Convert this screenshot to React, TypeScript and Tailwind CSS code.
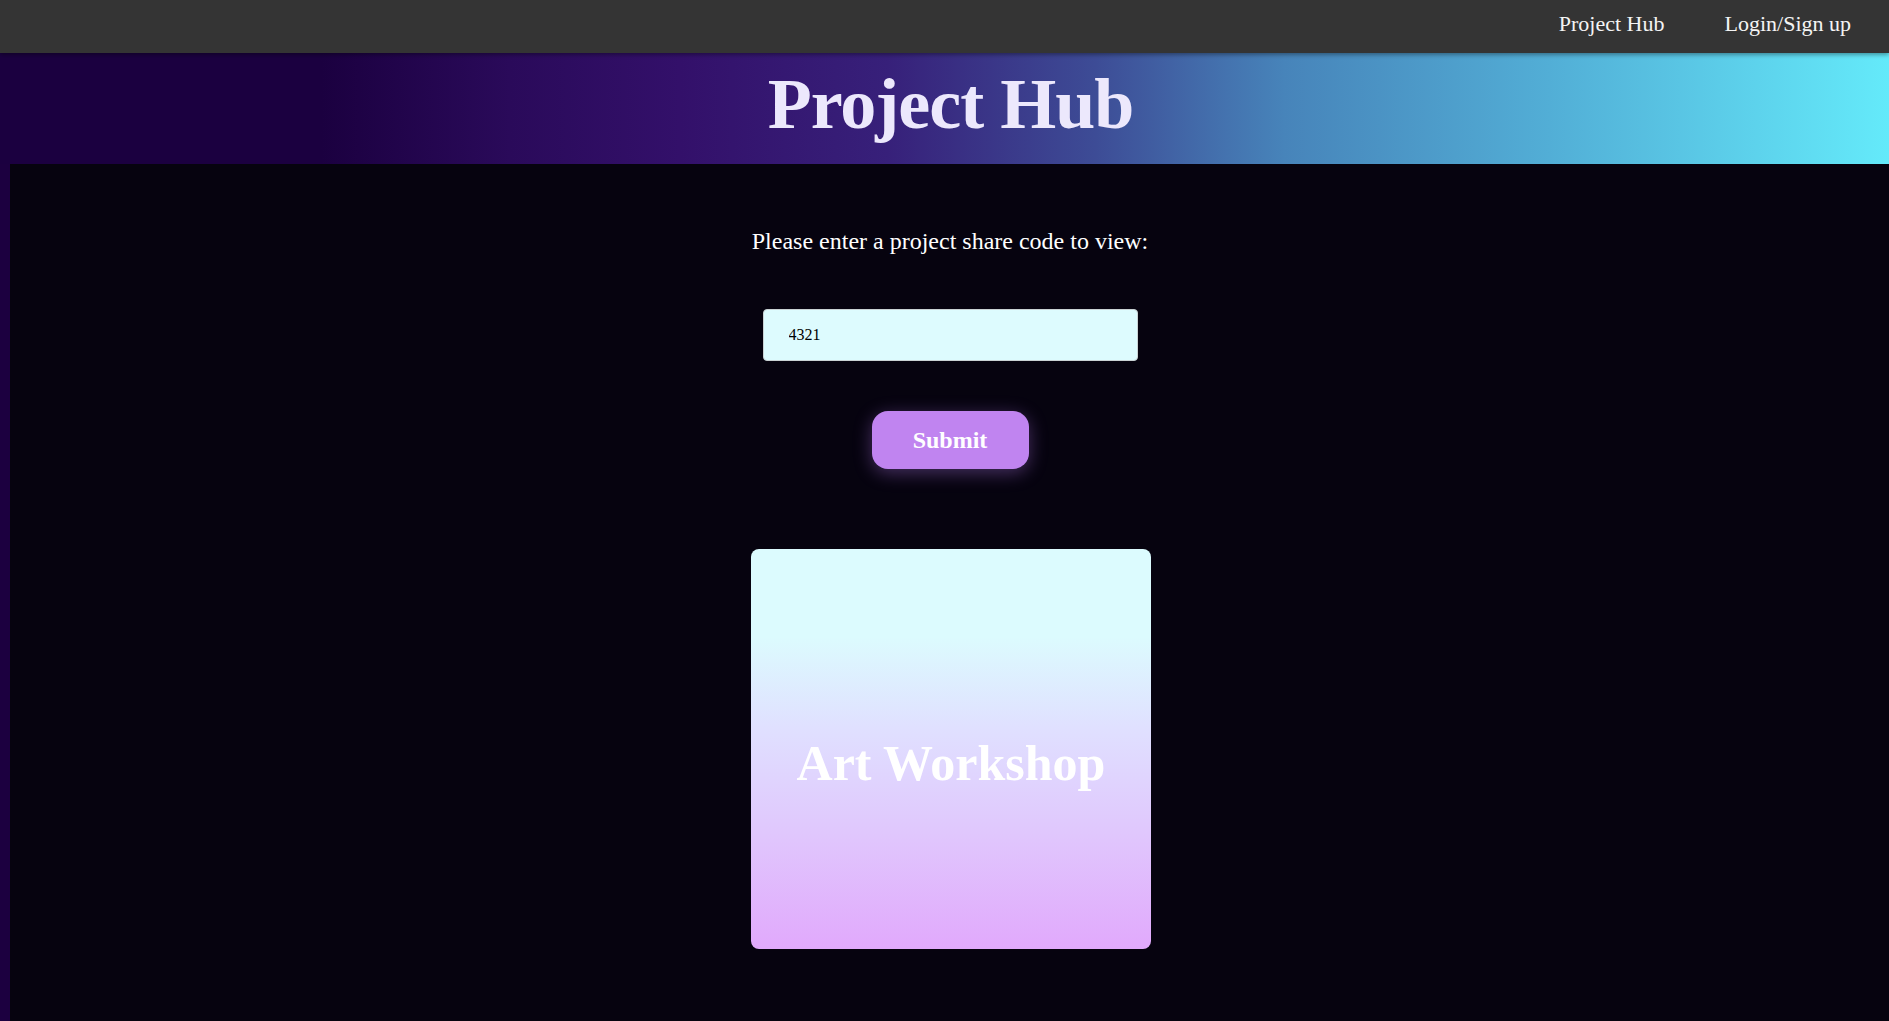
import React, { useState } from 'react';

const NavBar = () => {
    return (
        <nav className="relative z-10 h-[53px] bg-[#343434] flex items-center justify-end gap-[60px] pr-[38px] pb-[5px] text-[22px] text-[#f4f4f4] shadow-[0_2px_4px_rgba(0,0,0,0.35)]">
            <a href="#" className="leading-none">Project Hub</a>
            <a href="#" className="leading-none">Login/Sign up</a>
        </nav>
    );
};

const Banner = () => {
    return (
        <header className="h-[111px] pl-[12px] pb-[10px] flex items-center justify-center bg-[linear-gradient(to_right,#1b0040_0%,#1b0040_17%,#2a0a5a_27%,#33106a_36%,#37207a_47%,#3d4c96_58%,#4784ba_68%,#52aed6_82%,#64eafa_100%)]">
            <h1 className="text-[72px] font-bold text-[#ece8fc] leading-none tracking-[-1px]">Project Hub</h1>
        </header>
    );
};

const ProjectCard = ({ title }: { title: string }) => {
    return (
        <div className="w-[400px] h-[400px] rounded-lg flex items-center justify-center pt-[28px] bg-[linear-gradient(to_bottom,#dcfbfe_0%,#dcfbfe_22%,#e0e0ff_45%,#e0c8fd_70%,#e1a9fc_100%)]">
            <h2 className="text-[50px] font-bold text-white leading-none">{title}</h2>
        </div>
    );
};

export default function App() {
    const [code, setCode] = useState('4321');

    return (
        <div className="min-h-screen bg-[#1c0040] font-['Liberation_Serif','Times_New_Roman',serif]">
            <NavBar />
            <Banner />
            <main className="ml-[10px] pl-[1px] min-h-[857px] bg-[#06030f] flex flex-col items-center">
                <p className="mt-[63px] text-[24px] leading-[28px] text-white">Please enter a project share code to view:</p>
                <input
                    value={code}
                    onChange={(e) => setCode(e.target.value)}
                    className="mt-[54px] w-[375px] h-[52px] pl-[25px] rounded-[4px] border border-[#c9d2d4] bg-[#ddfbfe] text-[16px] text-black outline-none"
                />
                <button className="mt-[50px] w-[157px] h-[58px] rounded-[16px] bg-[#c084f0] text-white text-[24px] font-bold shadow-[0_4px_18px_rgba(192,132,252,0.35)]">
                    Submit
                </button>
                <div className="mt-[80px] mb-[73px] pl-[2px]">
                    <ProjectCard title="Art Workshop" />
                </div>
            </main>
        </div>
    );
}
